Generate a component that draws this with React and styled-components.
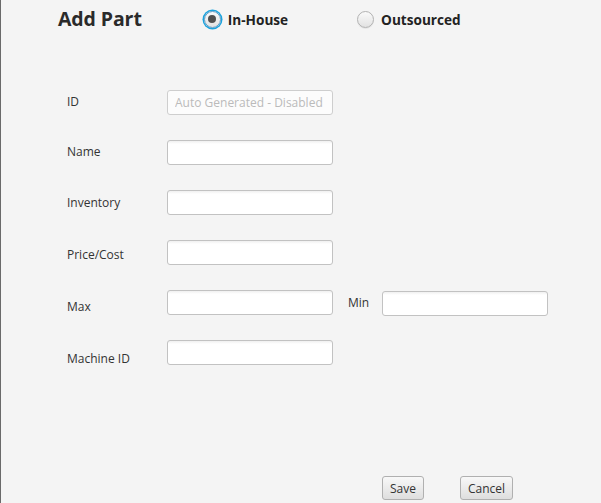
import React from 'react'
import styled, { createGlobalStyle } from 'styled-components'

const GlobalStyle = createGlobalStyle`
  html, body {
    margin: 0;
    padding: 0;
    background: #f4f4f4;
  }
  body {
    font-family: "Open Sans", "Noto Sans", sans-serif;
    color: #333333;
  }
`

const Window = styled.div`
  box-sizing: border-box;
  height: 503px;
  border-left: 1px solid #6a6a6a;
  display: flex;
  flex-direction: column;
`

const Header = styled.div`
  display: flex;
  align-items: center;
  height: 38px;
  padding-left: 57px;
`

const Title = styled.h1`
  margin: 0 61px 1px 0;
  font-size: 19.5px;
  font-weight: 700;
  color: #2a2a2a;
  letter-spacing: -0.1px;
`

const RadioGroup = styled.label`
  display: flex;
  align-items: center;
  gap: 7px;
  margin-right: ${(p) => p.$space || 0}px;
  font-size: 13.6px;
  font-weight: 700;
  color: #222;
`

const RadioDot = styled.span`
  box-sizing: border-box;
  width: 17px;
  height: 17px;
  border-radius: 50%;
  border: 1px solid ${(p) => (p.$focused ? '#5b9ac6' : '#b2b2b2')};
  background: linear-gradient(#fafafa, #e2e2e2);
  box-shadow: ${(p) => (p.$focused ? '0 0 0 1.5px #1aa3dd' : '0 1px 0 rgba(0,0,0,0.06)')};
  display: flex;
  align-items: center;
  justify-content: center;
  margin-left: ${(p) => (p.$focused ? 1 : 0)}px;

  &::after {
    content: '';
    width: 8px;
    height: 8px;
    border-radius: 50%;
    background: ${(p) => (p.$checked ? '#505050' : 'transparent')};
  }
`

const Form = styled.div`
  display: grid;
  grid-template-columns: 100px 166px 15px 34px 166px;
  grid-auto-rows: 50px;
  padding: 52px 0 0 66px;
`

const Label = styled.span`
  font-size: 12px;
  color: #333;
  line-height: 25px;
  height: 25px;
  align-self: start;
  transform: translateY(${(p) => p.$offset || 0}px);
  grid-column: ${(p) => p.$col || 1};
`

const Field = styled.input`
  box-sizing: border-box;
  width: 166px;
  height: 25px;
  margin-top: ${(p) => p.$top || 0}px;
  padding: 0 7px;
  border: 1px solid #c2c2c2;
  border-radius: 3px;
  background: linear-gradient(#f0f0f0 0, #ffffff 3px);
  font-family: inherit;
  font-size: 12px;
  color: #333;
  outline: none;
  grid-column: ${(p) => p.$col || 2};

  &::placeholder {
    color: #a8a8a8;
  }
  &:disabled {
    opacity: 0.75;
    background: #fff;
  }
`

const Footer = styled.div`
  margin-top: auto;
  display: flex;
  gap: 36px;
  padding: 0 0 3px 381px;
`

const Button = styled.button`
  box-sizing: border-box;
  height: 24px;
  padding: 0 7px;
  border: 1px solid #b0b0b0;
  border-radius: 3px;
  background: linear-gradient(#f8f8f8, #dedede);
  font-family: inherit;
  font-size: 12px;
  color: #333;
`

const rows = [
  { label: 'ID', offset: -1, placeholder: 'Auto Generated - Disabled', disabled: true },
  { label: 'Name', offset: -1 },
  { label: 'Inventory', offset: 0 },
  { label: 'Price/Cost', offset: 2 },
  { label: 'Max', offset: 4, extra: true },
  { label: 'Machine ID', offset: 6 },
]

const App = () => {
  return (
    <Window>
      <GlobalStyle />
      <Header>
        <Title>Add Part</Title>
        <RadioGroup $space={69}>
          <RadioDot $checked $focused />
          In-House
        </RadioGroup>
        <RadioGroup>
          <RadioDot />
          Outsourced
        </RadioGroup>
      </Header>
      <Form>
        {rows.map((r) => (
          <React.Fragment key={r.label}>
            <Label $offset={r.offset}>{r.label}</Label>
            <Field placeholder={r.placeholder} disabled={r.disabled} />
            {r.extra && (
              <>
                <Label $col={4} $offset={0}>Min</Label>
                <Field $col={5} $top={1} />
              </>
            )}
          </React.Fragment>
        ))}
      </Form>
      <Footer>
        <Button>Save</Button>
        <Button>Cancel</Button>
      </Footer>
    </Window>
  )
}

export default App
